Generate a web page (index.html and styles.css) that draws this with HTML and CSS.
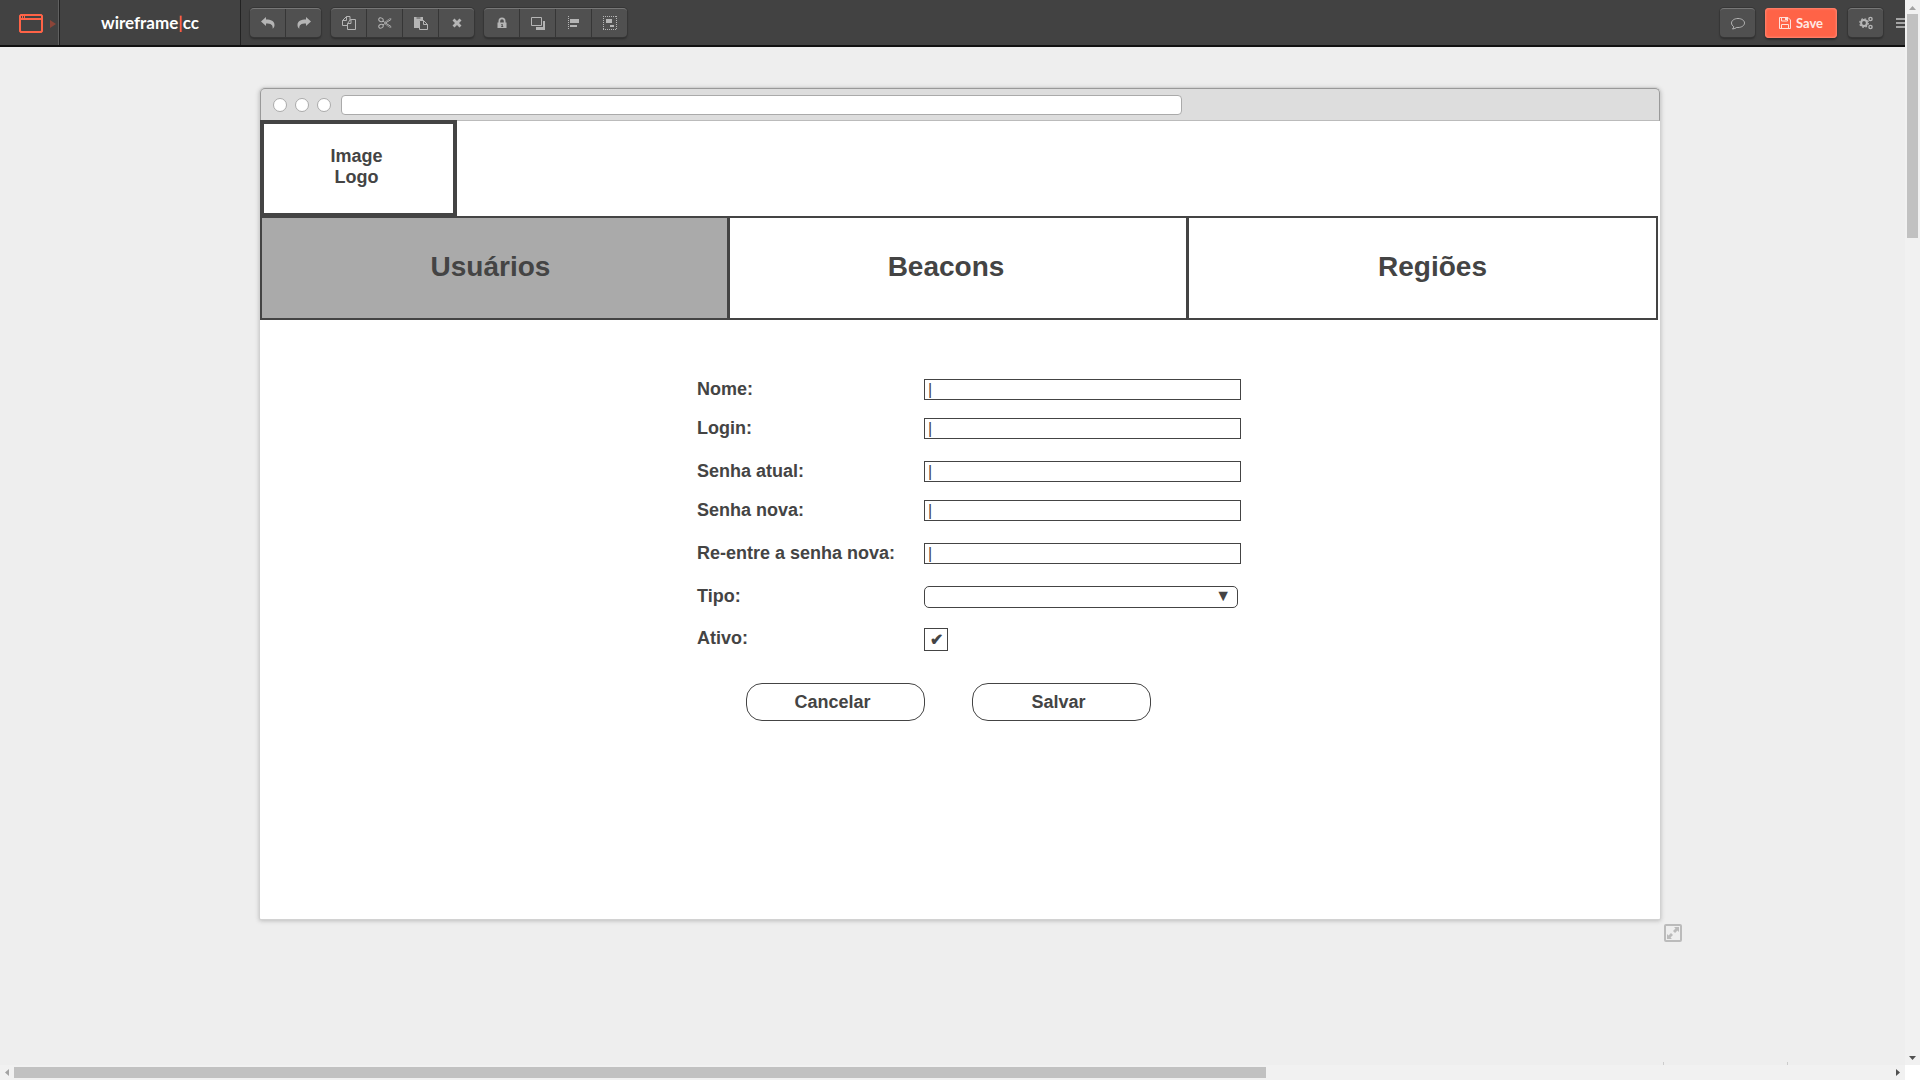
FILE: index.html
```
<!DOCTYPE html>
<html lang="pt">
<head>
<meta charset="utf-8">
<title>wireframe|cc</title>
<link rel="stylesheet" href="styles.css">
</head>
<body>
<div class="app">
  <div class="view">
    <header class="toolbar">
      <button class="stencil" aria-label="Browser template">
        <svg width="24" height="19" viewBox="0 0 24 19"><path fill="#ff6347" fill-rule="evenodd" d="M1.500 0h21L24 1.500v16L22.500 19h-21L0 17.500v-16zM2 6v10.500l.5.5h19l.5-.5V6zM2 2v2h1V2zM4 2v2h1V2zM6 2v2h16V2z"/></svg>
        <svg width="6" height="8" viewBox="0 0 6 8"><path fill="#8c4539" d="M0 0l6 4-6 4z"/></svg>
      </button>
      <a class="brand" href="#">wireframe<span class="brand-bar">|</span>cc</a>
      <div class="tools">
        <div class="group">
          <button class="tool" aria-label="Undo"><svg width="14" height="14" viewBox="0 0 14 14"><path d="M0 5.500L5 1v2.500c5 0 8.500 1.500 8.500 5.500 0 1.600-.8 3-1.800 3.800.3-4-1.700-5.300-6.700-5.300V10z"/></svg></button>
          <button class="tool" aria-label="Redo"><svg width="14" height="14" viewBox="0 0 14 14"><path d="M14 5.500L9 1v2.500C4 3.500.5 5 .5 9c0 1.600.8 3 1.800 3.800C2 8.800 4 7.500 9 7.500V10z"/></svg></button>
        </div>
        <div class="group">
          <button class="tool" aria-label="Copy"><svg width="14" height="14" viewBox="0 0 14 14"><path class="line" d="M5.500 9.500h-5v-5l4-4h3.500v4M4.500.5v4h-4M8.500 3.500h5v10h-8v-6zM9 3.500v4H5.500"/></svg></button>
          <button class="tool" aria-label="Cut"><svg width="14" height="14" viewBox="0 0 14 14"><g class="line"><ellipse cx="3" cy="3.800" rx="2.300" ry="1.800" transform="rotate(25 3 3.800)"/><ellipse cx="3" cy="10.200" rx="2.300" ry="1.800" transform="rotate(-25 3 10.200)"/><path d="M5 5l2.500 2L13 3.500 M5 9l2.500-2L13 10.500"/><path opacity=".6" d="M7 6l5-3.500 1.500.5M7 8l5 3.500 1.500-.5"/></g></svg></button>
          <button class="tool" aria-label="Paste"><svg width="14" height="14" viewBox="0 0 14 14"><path d="M0 1h9v3H6L5 5v7H0z"/><path class="line" d="M5.500 4.500h4l4 4v5h-8zM9.500 4.500v4h4"/><path fill="#505050" d="M2.500 1.500h4v1h-4z"/></svg></button>
          <button class="tool" aria-label="Delete"><svg width="14" height="14" viewBox="0 0 14 14"><path d="M4.500 2.500L7 5l2.500-2.500 2 2L9 7l2.500 2.500-2 2L7 9l-2.500 2.500-2-2L5 7 2.500 4.500z"/></svg></button>
        </div>
        <div class="group">
          <button class="tool" aria-label="Lock"><svg width="14" height="14" viewBox="0 0 14 14"><path fill-rule="evenodd" d="M2.500 6.500h1V5a3.500 3.500 0 0 1 7 0v1.500h1V12h-9zM5.200 6.500h3.600V5a1.800 1.800 0 0 0-3.600 0zM6.300 8v1h.4v1h-.5v1h2v-1h-.5V8z"/></svg></button>
          <button class="tool" aria-label="Arrange"><svg width="14" height="14" viewBox="0 0 14 14"><path class="line" d="M.5 1.500h10v8H.5z"/><path d="M12 5h2v9H5v-3h7z"/></svg></button>
          <button class="tool" aria-label="Align"><svg width="14" height="14" viewBox="0 0 14 14"><path class="line" stroke-dasharray="1 1" d="M1.500 0v14"/><path d="M3 3h9v4H3zM3 9h7v2H3z"/></svg></button>
          <button class="tool" aria-label="Group"><svg width="14" height="14" viewBox="0 0 14 14"><path class="line" stroke-dasharray="1 1" d="M0 .5h14M0 13.500h14M.5 0v14M13.500 0v14"/><path d="M3 3h6v4H3zM7 9h4v2H7z"/></svg></button>
        </div>
      </div>
      <div class="actions">
        <button class="tool single" aria-label="Comments"><svg width="14" height="14" viewBox="0 0 14 14"><path class="line" d="M7 2.500c3.600 0 6.500 2 6.500 4.500S10.600 11.500 7 11.500l-1.200-.1C4.700 12.300 3.300 12.800 1.500 13c.8-.8 1.200-1.500 1.300-2.300C1.400 9.800.5 8.500.5 7 .5 4.500 3.400 2.500 7 2.500z"/></svg></button>
        <button class="save"><svg width="12" height="12" viewBox="0 0 12 12"><path fill="none" stroke="#ffe0da" d="M.5.5h8.500l2.500 2.500v8.500H.5zM2.500.5v3.500h6V.5M2.500 11.500v-4h7v4"/><path fill="#ffe0da" d="M6 1h2v2H6z"/></svg>Save</button>
        <button class="tool single" aria-label="Settings"><svg width="14" height="14" viewBox="0 0 14 14"><circle cx="5" cy="7" r="2.900" fill="none" stroke="#b5b5b5" stroke-width="2"/><circle cx="5" cy="7" r="4.300" fill="none" stroke="#b5b5b5" stroke-width="1.200" stroke-dasharray="1.700 1.680"/><circle cx="11.500" cy="3" r="1.600" fill="none" stroke="#b5b5b5" stroke-width="1.400"/><circle cx="11.500" cy="11" r="1.600" fill="none" stroke="#b5b5b5" stroke-width="1.400"/></svg></button>
        <button class="menu" aria-label="Menu"><svg width="9" height="12" viewBox="0 0 9 12"><path fill="#a5a5a5" d="M0 1h9v2H0zM0 5h9v2H0zM0 9h9v2H0z"/></svg></button>
      </div>
    </header>

    <main class="canvas">
      <section class="window">
        <div class="chrome">
          <i class="dot"></i><i class="dot"></i><i class="dot"></i>
          <input class="address" type="text" aria-label="Address">
        </div>
        <div class="logo">Image<br>Logo</div>
        <nav class="tabs">
          <button class="tab users">Usuários</button>
          <button class="tab beacons">Beacons</button>
          <button class="tab regions">Regiões</button>
        </nav>
        <form class="form">
          <div class="fields">
            <div class="field"><label for="nome">Nome:</label><input class="text" id="nome" type="text" value="|"></div>
            <div class="field"><label for="login">Login:</label><input class="text" id="login" type="text" value="|"></div>
          </div>
          <div class="fields">
            <div class="field"><label for="atual">Senha atual:</label><input class="text" id="atual" type="text" value="|"></div>
            <div class="field"><label for="nova">Senha nova:</label><input class="text" id="nova" type="text" value="|"></div>
          </div>
          <div class="fields">
            <div class="field"><label for="repete">Re-entre a senha nova:</label><input class="text" id="repete" type="text" value="|"></div>
          </div>
          <div class="fields options">
            <div class="field"><label for="tipo">Tipo:</label><span class="picker"><select id="tipo"><option></option></select></span></div>
            <div class="field"><label for="ativo">Ativo:</label><input class="check" id="ativo" type="checkbox" checked></div>
          </div>
          <div class="buttons">
            <button type="button" class="button">Cancelar</button>
            <button type="button" class="button">Salvar</button>
          </div>
        </form>
        <button class="resize" aria-label="Resize"><svg width="14" height="14" viewBox="0 0 14 14"><path fill="#bbb" d="M8 1h5v5l-1.500-1.500L9 7 7 5l2.500-2.500zM1 8l1.500 1.500L5 7l2 2-2.500 2.500L6 13H1z"/></svg></button>
      </section>
      <div class="ticks"><i class="tick"></i><i class="tick"></i></div>
    </main>
  </div>

  <div class="scroll vertical">
    <svg width="15" height="14" viewBox="0 0 15 14"><path fill="#a3a3a3" d="M4 10l3.500-4L11 10z"/></svg>
    <div class="track"><div class="thumb"></div></div>
    <svg width="15" height="14" viewBox="0 0 15 14"><path fill="#505050" d="M4 5h7L7.500 9z"/></svg>
  </div>
  <div class="scroll horizontal">
    <svg width="14" height="15" viewBox="0 0 14 15"><path fill="#a3a3a3" d="M9 4v7L5 7.500z"/></svg>
    <div class="track"><div class="thumb"></div></div>
    <svg width="14" height="15" viewBox="0 0 14 15"><path fill="#505050" d="M5 4v7l4-3.500z"/></svg>
  </div>
</div>
</body>
</html>
```
FILE: styles.css
```
* { box-sizing: border-box; }
body {
  margin: 0;
  background: #fff;
  color: #444;
  font-family: "Liberation Sans", Arial, sans-serif;
}
button, input, select { font: inherit; color: inherit; margin: 0; padding: 0; border: 0; background: none; }
svg { display: block; flex: none; }

.app {
  display: grid;
  grid-template-columns: minmax(0, 1fr) 15px;
  grid-template-rows: minmax(0, 1fr) 15px;
  height: 100vh;
}
.view { display: flex; flex-direction: column; overflow: hidden; background: #eee; }

/* toolbar */
.toolbar {
  display: flex;
  flex: none;
  height: 47px;
  background: #424242;
  border-bottom: 2px solid #111;
}
.stencil {
  display: flex;
  align-items: center;
  gap: 7px;
  width: 59px;
  padding: 2px 0 0 19px;
  border-right: 1px solid #606060;
}
.brand {
  display: flex;
  align-items: center;
  justify-content: center;
  width: 182px;
  border-left: 1px solid #222;
  border-right: 1px solid #222;
  color: #fff;
  font: bold 17px "Lato", sans-serif;
  text-decoration: none;
}
.brand-bar { color: #ff6347; }
.tools { display: flex; gap: 10px; padding: 8px 9px; }
.group {
  display: flex;
  height: 29px;
  border-radius: 4px;
  background: #505050;
  border-top: 1px solid #777;
  box-shadow: 0 0 0 1px #363636, 0 2px 2px #2d2d2d;
}
.tool { display: flex; flex: none; align-items: center; justify-content: center; width: 35px; }
.tool + .tool { width: 36px; border-left: 1px solid #363636; }
.tool svg { fill: #b5b5b5; }
.tool .line { fill: none; stroke: #b5b5b5; }
.actions { display: flex; margin-left: auto; padding-top: 8px; }
.single {
  height: 29px;
  border-radius: 4px;
  background: #505050;
  border-top: 1px solid #777;
  box-shadow: 0 0 0 1px #363636, 0 2px 2px #2d2d2d;
}
.save {
  display: flex;
  align-items: center;
  justify-content: center;
  gap: 5px;
  width: 72px;
  height: 30px;
  margin: 0 11px 0 10px;
  border-radius: 4px;
  background: #ff6347;
  box-shadow: inset 0 0 2px 1px #ff8571, 0 2px 2px #2d2d2d;
  color: #ffe9e5;
  font: bold 13px "Lato", sans-serif;
}
.menu { display: flex; height: 30px; align-items: center; margin-left: 13px; }

/* canvas and mock browser window */
.canvas { display: flex; flex: 1; flex-direction: column; padding: 41px 245px 0 260px; }
.window {
  position: relative;
  background: #fff;
  border-radius: 5px 5px 1px 1px;
  box-shadow: 0 0 0 1px #d2d2d2, 0 1px 4px 1px #bbb;
}
.chrome {
  display: flex;
  align-items: center;
  gap: 2px;
  height: 33px;
  padding: 0 12px;
  background: #ddd;
  border: 1px solid #999;
  border-bottom-color: #bbb;
  border-radius: 5px 5px 0 0;
}
.dot { flex: none; width: 14px; height: 14px; margin-right: 6px; border: 1px solid #aaa; border-radius: 50%; background: #fff; }
.address { flex: 0 1 841px; min-width: 0; height: 20px; margin-left: 2px; border: 1px solid #aaa; border-radius: 4px; background: #fff; }
.logo {
  width: 197px;
  height: 96px;
  padding: 22px 4px 0 0;
  border: 4px solid #444;
  border-bottom: 3px solid #444;
  margin-top: -1px;
  position: relative;
  font-weight: bold;
  font-size: 18px;
  line-height: 21px;
  text-align: center;
}
.tabs {
  display: grid;
  grid-template-columns: 465fr 459fr 470fr;
  height: 104px;
  margin-right: 2px;
  border: 2px solid #444;
}
.tab { font-weight: bold; font-size: 28px; padding-bottom: 2px; }
.tab + .tab { border-left: 3px solid #444; }
.users { background: #aaa; padding-right: 8px; }
.beacons { padding-right: 24px; }
.regions { padding-left: 20px; }

.form {
  display: flex;
  flex-direction: column;
  gap: 21px;
  width: 566px;
  margin: 0 auto;
  padding: 59px 0 198px 20px;
  font-weight: bold;
  font-size: 18px;
  line-height: 20px;
}
.fields { display: flex; flex-direction: column; gap: 17px; }
.options { gap: 20px; }
.field { display: grid; grid-template-columns: 227px 1fr; height: 22px; }
.text { width: 317px; height: 21px; padding-left: 3px; border: 1px solid #444; font-weight: normal; font-size: 16px; }
.picker { position: relative; width: 314px; height: 22px; }
.picker select { width: 100%; height: 100%; appearance: none; border: 1px solid #444; border-radius: 5px; }
.picker::after { content: "▼"; position: absolute; right: 7px; top: 0; font-size: 16px; font-weight: normal; pointer-events: none; }
.check {
  appearance: none;
  display: grid;
  place-items: center;
  width: 24px;
  height: 23px;
  border: 1px solid #444;
  font-size: 16px;
}
.check:checked::before { content: "✔"; }
.buttons { display: flex; gap: 47px; padding: 12px 0 0 49px; }
.button { width: 179px; height: 38px; padding-right: 6px; border: 1px solid #444; border-radius: 16px; font-weight: bold; }

.resize {
  position: absolute;
  right: -22px;
  bottom: -23px;
  width: 18px;
  height: 18px;
  border: 2px solid #bbb;
  border-radius: 2px;
}
.ticks { display: flex; justify-content: flex-end; gap: 123px; margin: auto -128px 0 0; }
.tick { width: 1px; height: 3px; background: #ccc; }

/* scroll bars */
.scroll { display: flex; background: #f1f1f1; }
.vertical { flex-direction: column; }
.track { flex: 1; }
.thumb { background: #c1c1c1; }
.vertical .thumb { width: 11px; height: 21.6%; margin-left: 2px; }
.horizontal .thumb { width: 66.7%; height: 11px; margin-top: 2px; }
```
